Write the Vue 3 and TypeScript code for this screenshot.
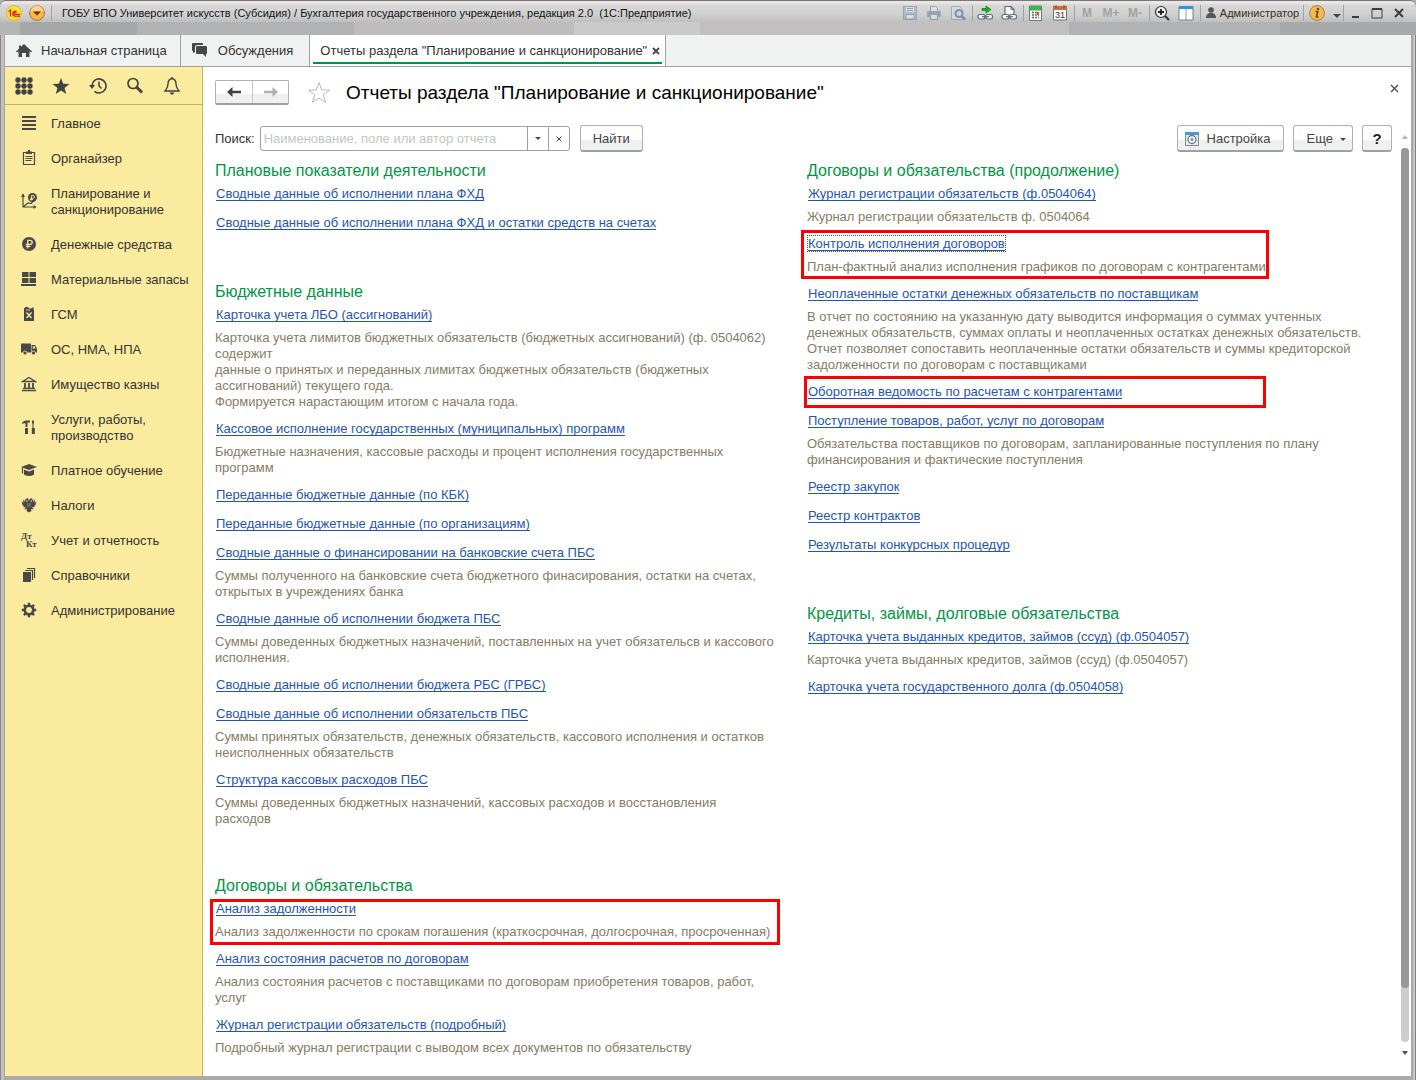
<script setup lang="ts">
import { ref } from 'vue'

interface MenuEntry { title: string; icon: string }
interface Report { name: string; note?: string; mark?: string; focused?: boolean }
interface Group { title: string; reports: Report[] }

const query = ref('')

const systemTools: { label: string; icon: string }[][] = [
  [
    { label: 'Сохранить', icon: '<g opacity=".6"><path d="M1.500 1.500h13v13h-13z" fill="#9fb0c4" stroke="#6d83a0"/><path d="M4 2h8v5H4z" fill="#dfe4ea"/><path d="M4 9.500h8V14H4z" fill="#e8ecf0" stroke="#6d83a0"/><path d="M5 3.500h6M5 5.500h6" stroke="#6d83a0"/></g>' },
    { label: 'Печать', icon: '<g opacity=".6"><path d="M4.500 6V1.500h5l2 2V6" fill="#e6eaee" stroke="#667c98"/><rect x="1" y="6" width="14" height="6" rx="1" fill="#7288a4"/><path d="M4.500 9.500h7v5h-7z" fill="#e6eaee" stroke="#667c98"/></g>' },
    { label: 'Предварительный просмотр', icon: '<g opacity=".7"><path d="M1.500 1.500h8l3 3v10h-11z" fill="#d8dde2" stroke="#8d9db2"/><circle cx="9" cy="8.500" r="3.500" fill="#c9d5e3" stroke="#5d7699" stroke-width="2"/><path d="M11.500 11l3.500 3.500" stroke="#5d7699" stroke-width="2.500"/></g>' },
  ],
  [
    { label: 'Получить ссылку', icon: '<path d="M5 3.500h4V1l5 3.500L9 8V5.500H5z" fill="#13b51b" stroke="#0b7a12" stroke-width=".7"/><rect x="1" y="9.500" width="7" height="4.500" rx="2" fill="#f3f5f7" stroke="#5b6d80" stroke-width="1.200"/><rect x="8.500" y="9.500" width="7" height="4.500" rx="2" fill="#f3f5f7" stroke="#5b6d80" stroke-width="1.200"/><path d="M5 11.700h7" stroke="#5b6d80" stroke-width="1.200"/>' },
    { label: 'Перейти по ссылке', icon: '<path d="M4 9V1.500h6l3 3V9" fill="#f6f8fa" stroke="#5b6d80" stroke-width="1.200"/><path d="M10 1.500v3h3" fill="none" stroke="#5b6d80"/><rect x="1" y="9.500" width="7" height="4.500" rx="2" fill="#f3f5f7" stroke="#5b6d80" stroke-width="1.200"/><rect x="8.500" y="9.500" width="7" height="4.500" rx="2" fill="#f3f5f7" stroke="#5b6d80" stroke-width="1.200"/><path d="M5 11.700h7" stroke="#5b6d80" stroke-width="1.200"/>' },
  ],
  [
    { label: 'Калькулятор', icon: '<path d="M1.500 1h12v14.500h-12z" fill="#f4f6f2" stroke="#6f7d72"/><path d="M2 1h11v4.500H2z" fill="#3fb54a"/><path d="M4 7.500h7M4 10h7M4 12.500h7" stroke="#69716a" stroke-width="1.500" stroke-dasharray="2 1"/><path d="M10 7v3" stroke="#d8502c" stroke-width="2"/>' },
    { label: 'Календарь', icon: '<path d="M1.500 2h13v13h-13z" fill="#fafafa" stroke="#6e7378"/><path d="M1 1h14v4H1z" fill="#c0703c"/><path d="M4 0v3M12 0v3" stroke="#8a4a22"/><text x="8" y="13" font-family="Liberation Sans, sans-serif" font-size="9" text-anchor="middle" fill="#333">31</text>' },
  ],
]

const quickTools: { label: string; icon: string }[] = [
  { label: 'Функции', icon: '<g fill="currentColor"><circle cx="3" cy="3" r="2.700"/><circle cx="9" cy="3" r="2.700"/><circle cx="15" cy="3" r="2.700"/><circle cx="3" cy="9" r="2.700"/><circle cx="9" cy="9" r="2.700"/><circle cx="15" cy="9" r="2.700"/><circle cx="3" cy="15" r="2.700"/><circle cx="9" cy="15" r="2.700"/><circle cx="15" cy="15" r="2.700"/></g>' },
  { label: 'Избранное', icon: '<path d="M9 1l2.200 5.800 6.300.2-5 3.900 1.800 6.100L9 13.500 3.700 17l1.800-6.100-5-3.900 6.300-.2z" fill="currentColor"/>' },
  { label: 'История', icon: '<path d="M3 9a7 7 0 1 1 2.500 5.300" fill="none" stroke="currentColor" stroke-width="1.600"/><path d="M0 8h6l-3 4z" fill="currentColor"/><path d="M10 4.500V9l2.500 2.500" fill="none" stroke="currentColor" stroke-width="1.500"/>' },
  { label: 'Поиск', icon: '<circle cx="7" cy="6.500" r="5" fill="none" stroke="currentColor" stroke-width="1.700"/><path d="M10.500 10l5.500 5.500" stroke="currentColor" stroke-width="3"/>' },
  { label: 'Оповещения', icon: '<path d="M9 1.500c-3 .5-4 2.800-4 5.500 0 3.500-1.500 5-3 7h14c-1.500-2-3-3.500-3-7 0-2.700-1-5-4-5.500z" fill="none" stroke="currentColor" stroke-width="1.400"/><path d="M9 0v2" stroke="currentColor" stroke-width="1.500"/><path d="M6.500 15.500h5L10 17.500H8z" fill="currentColor"/>' },
]

const menu: MenuEntry[] = [
  { title: 'Главное', icon: '<path d="M1 2h14M1 6h14M1 10h14M1 14h14" stroke="currentColor" stroke-width="2"/>' },
  { title: 'Органайзер', icon: '<path d="M2.500 2.500h11v12h-11z" fill="none" stroke="currentColor" stroke-width="1.200"/><path d="M5 1.500h2V0h2v1.500h2V4H5z" fill="currentColor"/><path d="M4.500 6.500h7M4.500 8.500h7M4.500 10.500h6" stroke="currentColor"/>' },
  { title: 'Планирование и санкционирование', icon: '<path d="M2 1v13h13M2 14l5-4 3 .5 3-3" fill="none" stroke="currentColor" stroke-width="1.200"/><path d="M0 4l2-3.500L4 4zM12.500 12l3 2-3 2z" fill="currentColor"/><circle cx="11.500" cy="4.500" r="4.500" fill="currentColor"/><path d="M10.500 7.500V2.500h1.500q1.500 0 1.500 1.300T12 5.200H9M9 6.500h3" fill="none" stroke="#fbeb9e" stroke-width=".9"/>' },
  { title: 'Денежные средства', icon: '<circle cx="8" cy="8" r="7" fill="currentColor"/><path d="M6.800 12.500V4.300h2.400q2 0 2 2t-2 2H4.800M4.800 10.300h4.700" fill="none" stroke="#fbeb9e" stroke-width="1.300"/>' },
  { title: 'Материальные запасы', icon: '<path d="M1 1h6.500v5H1zM8.500 1H15v5H8.500zM1 7h6.500v5H1zM8.500 7H15v5H8.500zM0 13h15v2H0z" fill="currentColor"/>' },
  { title: 'ГСМ', icon: '<path d="M3 2.500L4.500 1H7l1 1.500h2L12.500 1V3L13 4v11H3z" fill="currentColor"/><path d="M5.500 6.500l5 5.500M10.500 6.500l-5 5.500" stroke="#fbeb9e" stroke-width="1.300"/><path d="M5 4h4" stroke="#fbeb9e" stroke-width=".8"/>' },
  { title: 'ОС, НМА, НПА', icon: '<path d="M0 2.500h10v9H0zM10.500 4H14l2 3.500v4h-5.500z" fill="currentColor"/><path d="M11.800 5.200h1.700l1.100 2.300h-2.800z" fill="#fbeb9e"/><circle cx="4" cy="12" r="2" fill="currentColor" stroke="#fbeb9e" stroke-width=".8"/><circle cx="12.500" cy="12" r="2" fill="currentColor" stroke="#fbeb9e" stroke-width=".8"/>' },
  { title: 'Имущество казны', icon: '<path d="M1.500 5.500L8 1.500l6.500 4z" fill="none" stroke="currentColor" stroke-width="1.300"/><path d="M4 7v5M8 7v5M12 7v5" stroke="currentColor" stroke-width="1.800"/><path d="M2 12.300h12M1 14.500h14" stroke="currentColor" stroke-width="1.300"/>' },
  { title: 'Услуги, работы, производство', icon: '<path d="M1 4q1-2.500 4-2.500h4v2H6.500V8h-2V4.500q-2-.7-3.500.5zM4 9h3v6H4zM12 1l1 1v2l-.5 1v4h-1V5L11 4V2zM10.800 9h3v6h-3z" fill="currentColor"/>' },
  { title: 'Платное обучение', icon: '<path d="M0 5l8-3 8 3-8 3zM3 7.500l5 2 5-2v5q-5 3-10 0z" fill="currentColor"/><path d="M1.500 5.500v6" stroke="currentColor" stroke-width="1.200"/>' },
  { title: 'Налоги', icon: '<path d="M8 4L7 1.500 5.500 1 5 3l1.500 1L6 5.500 4 1.500 3.500 5 2 2l.3 4L.5 4l1 4L3 9.500 2 10l3 .5-2 2 3-.5-.5 2L8 15.500l2.500-1.500-.5-2 3 .5-2-2 3-.5-1-.5L14.500 8l1-4-1.800 2L14 2l-1.500 3L12 1.500l-2 4L9.500 4 11 3l-.5-2L9 1.500z" fill="currentColor"/><path d="M7 6v4M9 6v4" stroke="#fbeb9e" stroke-width=".4"/>' },
  { title: 'Учет и отчетность', icon: '<g font-family="Liberation Serif, serif" font-size="9" font-weight="bold" fill="currentColor"><text x="0" y="7">Дт</text><text x="5" y="15">Кт</text></g>' },
  { title: 'Справочники', icon: '<path d="M2 5h8v10H2z" fill="currentColor"/><path d="M4 3.500h7.500V13M6 1.500h7.500V11" fill="none" stroke="currentColor" stroke-width="1.200"/>' },
  { title: 'Администрирование', icon: '<circle cx="8" cy="8" r="4.200" fill="none" stroke="currentColor" stroke-width="2.600"/><path d="M8 .8v3M8 12.200v3M.8 8h3M12.200 8h3M2.900 2.900L5 5M11 11l2.100 2.100M2.900 13.100L5 11M11 5l2.100-2.100" stroke="currentColor" stroke-width="2.400"/>' },
]

const columns: Group[][] = [
  [
    {
      title: 'Плановые показатели деятельности',
      reports: [
        { name: 'Сводные данные об исполнении плана ФХД' },
        { name: 'Сводные данные об исполнении плана ФХД и остатки средств на счетах' },
      ],
    },
    {
      title: 'Бюджетные данные',
      reports: [
        { name: 'Карточка учета ЛБО (ассигнований)', note: 'Карточка учета лимитов бюджетных обязательств (бюджетных ассигнований) (ф. 0504062) содержит\nданные о принятых и переданных лимитах бюджетных обязательств (бюджетных ассигнований) текущего года.\nФормируется нарастающим итогом с начала года.' },
        { name: 'Кассовое исполнение государственных (муниципальных) программ', note: 'Бюджетные назначения, кассовые расходы и процент исполнения государственных программ' },
        { name: 'Переданные бюджетные данные (по КБК)' },
        { name: 'Переданные бюджетные данные (по организациям)' },
        { name: 'Сводные данные о финансировании на банковские счета ПБС', note: 'Суммы полученного на банковские счета бюджетного финасирования, остатки на счетах, открытых в учреждениях банка' },
        { name: 'Сводные данные об исполнении бюджета ПБС', note: 'Суммы доведенных бюджетных назначений, поставленных на учет обязательсв и кассового исполнения.' },
        { name: 'Сводные данные об исполнении бюджета РБС (ГРБС)' },
        { name: 'Сводные данные об исполнении обязательств ПБС', note: 'Суммы принятых обязательств, денежных обязательств, кассового исполнения и остатков неисполненных обязательств' },
        { name: 'Структура кассовых расходов ПБС', note: 'Суммы доведенных бюджетных назначений, кассовых расходов и восстановления\nрасходов' },
      ],
    },
    {
      title: 'Договоры и обязательства',
      reports: [
        { name: 'Анализ задолженности', note: 'Анализ задолженности по срокам погашения (краткосрочная, долгосрочная, просроченная)', mark: 'wide' },
        { name: 'Анализ состояния расчетов по договорам', note: 'Анализ состояния расчетов с поставщиками по договорам приобретения товаров, работ, услуг' },
        { name: 'Журнал регистрации обязательств (подробный)', note: 'Подробный журнал регистрации с выводом всех документов по обязательству' },
      ],
    },
  ],
  [
    {
      title: 'Договоры и обязательства (продолжение)',
      reports: [
        { name: 'Журнал регистрации обязательств (ф.0504064)', note: 'Журнал регистрации обязательств ф. 0504064' },
        { name: 'Контроль исполнения договоров', note: 'План-фактный анализ исполнения графиков по договорам с контрагентами', mark: 'tall', focused: true },
        { name: 'Неоплаченные остатки денежных обязательств по поставщикам', note: 'В отчет по состоянию на указанную дату выводится информация о суммах учтенных денежных обязательств, суммах оплаты и неоплаченных остатках денежных обязательств.\nОтчет позволяет сопоставить неоплаченные остатки обязательств и суммы кредиторской задолженности по договорам с поставщиками' },
        { name: 'Оборотная ведомость по расчетам с контрагентами', mark: 'short' },
        { name: 'Поступление товаров, работ, услуг по договорам', note: 'Обязательства поставщиков по договорам, запланированные поступления по плану финансирования и фактические поступления' },
        { name: 'Реестр закупок' },
        { name: 'Реестр контрактов' },
        { name: 'Результаты конкурсных процедур' },
      ],
    },
    {
      title: 'Кредиты, займы, долговые обязательства',
      reports: [
        { name: 'Карточка учета выданных кредитов, займов (ссуд) (ф.0504057)', note: 'Карточка учета выданных кредитов, займов (ссуд) (ф.0504057)' },
        { name: 'Карточка учета государственного долга (ф.0504058)' },
      ],
    },
  ],
]
</script>

<template>
  <div class="window">
    <header class="titlebar">
      <div class="caption">
        <svg class="logo" width="16" height="16" viewBox="0 0 16 16" aria-hidden="true">
          <circle cx="8" cy="8" r="7.500" fill="#fde23c" stroke="#e5b91d" />
          <path d="M2.500 6.500L4.500 5v6.500M10.500 6.300a2.600 2.600 0 1 0-2 4.900H14M10.500 7.500a1.200 1.200 0 1 0-1.500 1.800h5" fill="none" stroke="#d8231b" stroke-width="1.300" />
        </svg>
        <button class="orb" aria-label="Главное меню">
          <svg width="16" height="16" viewBox="0 0 16 16">
            <circle cx="8" cy="8" r="7.400" fill="#f7b54a" stroke="#a9762d" />
            <path d="M1.500 7a6.500 6.500 0 0 1 13 0q-6.500-2-13 0z" fill="#fbd18a" />
            <path d="M4 6.500h8L8 10.500z" fill="#5d3b12" />
          </svg>
        </button>
        <i class="sep"></i>
        <span class="name">ГОБУ ВПО Университет искусств (Субсидия) / Бухгалтерия государственного учреждения, редакция 2.0&nbsp; (1С:Предприятие)</span>
      </div>

      <div class="system">
        <template v-for="(set, i) in systemTools" :key="i">
          <div class="tools">
            <button v-for="tool in set" :key="tool.label" :aria-label="tool.label">
              <svg width="16" height="16" viewBox="0 0 16 16" v-html="tool.icon"></svg>
            </button>
          </div>
          <i class="sep"></i>
        </template>
        <div class="tools memory">
          <button>M</button><button>M+</button><button>M-</button>
        </div>
        <i class="sep"></i>
        <div class="tools">
          <button aria-label="Масштаб">
            <svg width="16" height="16" viewBox="0 0 16 16">
              <circle cx="7" cy="7" r="5.500" fill="#f1f1f1" stroke="#333" stroke-width="1.200" />
              <path d="M4 7h6M7 4v6" stroke="#222" stroke-width="1.800" />
              <path d="M11 11l4 4" stroke="#333" stroke-width="2.200" />
            </svg>
          </button>
          <button aria-label="Панели">
            <svg width="16" height="16" viewBox="0 0 16 16">
              <path d="M1 1.500h14V15H1z" fill="#fff" stroke="#6e7f92" />
              <path d="M1 1h14v3H1z" fill="#2f93e0" />
              <path d="M8 4v11" stroke="#8796a6" />
            </svg>
          </button>
        </div>
        <i class="sep"></i>
        <button class="user">
          <svg width="12" height="12" viewBox="0 0 12 12" aria-hidden="true">
            <circle cx="6" cy="3" r="2.800" fill="#555" />
            <path d="M1 11q0-4 3.500-5h3Q11 7 11 11z" fill="#555" />
          </svg>
          <span>Администратор</span>
        </button>
        <i class="sep"></i>
        <button class="info" aria-label="О программе">
          <svg width="16" height="16" viewBox="0 0 16 16">
            <circle cx="8" cy="8" r="7.400" fill="#f6b94a" stroke="#a6813f" />
            <path d="M6.500 6.500h2.200L7.500 12h2" fill="none" stroke="#5c503e" stroke-width="1.700" />
            <circle cx="9" cy="4" r="1.300" fill="#5c503e" />
          </svg>
        </button>
        <button class="more" aria-label="Ещё">
          <svg width="8" height="4" viewBox="0 0 8 4"><path d="M0 0h8L4 4z" fill="#444" /></svg>
        </button>
        <i class="sep"></i>
        <div class="tools frame">
          <button aria-label="Свернуть"><svg width="12" height="12" viewBox="0 0 12 12"><path d="M3 10h7" stroke="#3c3c3c" stroke-width="2" /></svg></button>
          <button aria-label="Развернуть"><svg width="12" height="12" viewBox="0 0 12 12"><path d="M1 2h10v9H1z" fill="none" stroke="#3c3c3c" /><path d="M1 2h10" stroke="#3c3c3c" stroke-width="2" /></svg></button>
          <button aria-label="Закрыть"><svg width="12" height="12" viewBox="0 0 12 12"><path d="M2 2l8 8M10 2l-8 8" stroke="#3c3c3c" stroke-width="2" /></svg></button>
        </div>
      </div>
    </header>

    <nav class="tabs">
      <a class="tab home" href="#home">
        <svg width="16" height="14" viewBox="0 0 16 14" aria-hidden="true"><path d="M8 0l8 7.500-1 1-1.500-1.200V13H10V9H6v4H2.500V7.300L1 8.500l-1-1L3 4.700V1.500h2v1.300z" fill="#484848" /></svg>
        <span>Начальная страница</span>
      </a>
      <a class="tab talks" href="#talks">
        <svg width="16" height="15" viewBox="0 0 16 15" aria-hidden="true"><path d="M1 0h9q1 0 1 1v1H5Q3 2 3 4v5L1 10V8Q0 8 0 7V1q0-1 1-1zM5 3h9q1 0 1 1v6q0 1-1 1v3l-3-3H5q-1 0-1-1V4q0-1 1-1z" fill="#484848" /></svg>
        <span>Обсуждения</span>
      </a>
      <div class="tab current">
        <a href="#reports">Отчеты раздела "Планирование и санкционирование"</a>
        <button aria-label="Закрыть вкладку">
          <svg width="8" height="8" viewBox="0 0 8 8"><path d="M1 1l6 6M7 1L1 7" stroke="#484848" stroke-width="1.800" /></svg>
        </button>
      </div>
    </nav>

    <div class="body">
      <aside class="sidebar">
        <div class="quick">
          <button v-for="tool in quickTools" :key="tool.label" :aria-label="tool.label">
            <svg width="18" height="18" viewBox="0 0 18 18" v-html="tool.icon"></svg>
          </button>
        </div>
        <a v-for="entry in menu" :key="entry.title" class="entry" href="#section">
          <svg width="16" height="16" viewBox="0 0 16 16" aria-hidden="true" v-html="entry.icon"></svg>
          <span>{{ entry.title }}</span>
        </a>
      </aside>

      <main class="page">
        <div class="heading">
          <div class="history">
            <button aria-label="Назад"><svg width="14" height="12" viewBox="0 0 14 12"><path d="M0 6l5.500-5v3.800H14v2.400H5.500V11z" fill="#404040" /></svg></button>
            <button aria-label="Вперед"><svg width="14" height="12" viewBox="0 0 14 12"><path d="M14 6L8.500 1v3.800H0v2.400h8.500V11z" fill="#b0b0b0" /></svg></button>
          </div>
          <button class="favorite" aria-label="В избранное">
            <svg width="24" height="23" viewBox="0 0 24 23"><path d="M12 1.500l2.700 7.400 7.900.2-6.300 4.800 2.300 7.600-6.600-4.500-6.600 4.500 2.300-7.600-6.300-4.800 7.900-.2z" fill="#fff" stroke="#b4b8bb" /></svg>
          </button>
          <h1>Отчеты раздела "Планирование и санкционирование"</h1>
          <button class="close" aria-label="Закрыть">
            <svg width="9" height="9" viewBox="0 0 9 9"><path d="M1 1l7 7M8 1L1 8" stroke="#484848" stroke-width="1.300" /></svg>
          </button>
        </div>

        <div class="scroller">
          <div class="content">
            <div class="toolbar">
              <label for="search">Поиск:</label>
              <div class="field">
                <input id="search" v-model="query" type="text" placeholder="Наименование, поле или автор отчета" />
                <button aria-label="Выбрать"><svg width="6" height="3" viewBox="0 0 6 3"><path d="M0 0h6L3 3z" fill="#484848" /></svg></button>
                <button aria-label="Очистить" @click="query = ''"><svg width="6" height="6" viewBox="0 0 6 6"><path d="M.5.5l5 5M5.500.5l-5 5" stroke="#484848" /></svg></button>
              </div>
              <button class="btn find">Найти</button>
              <div class="actions">
                <button class="btn">
                  <svg width="14" height="14" viewBox="0 0 14 14" aria-hidden="true">
                    <path d="M.5.5h13v13H.5z" fill="#e9edf0" stroke="#7f8b96" />
                    <path d="M0 0h14v3H0z" fill="#3d9be6" />
                    <circle cx="7" cy="7.500" r="4" fill="#f4f4f4" stroke="#777" stroke-width="1.300" />
                    <circle cx="7" cy="7.500" r="1.500" fill="#8a8a8a" />
                  </svg>
                  <span>Настройка</span>
                </button>
                <button class="btn etc">
                  <span>Еще</span>
                  <svg width="6" height="3" viewBox="0 0 6 3" aria-hidden="true"><path d="M0 0h6L3 3z" fill="#484848" /></svg>
                </button>
                <button class="btn help">?</button>
              </div>
            </div>

            <div class="columns">
              <div v-for="(column, c) in columns" :key="c" class="column">
                <section v-for="group in column" :key="group.title" class="group">
                  <h2>{{ group.title }}</h2>
                  <div v-for="report in group.reports" :key="report.name" class="report" :class="report.mark">
                    <div class="line"><a href="#report" :class="{ focused: report.focused }">{{ report.name }}</a></div>
                    <p v-if="report.note">{{ report.note }}</p>
                  </div>
                </section>
              </div>
            </div>
          </div>

          <div class="scrollbar" aria-hidden="true">
            <svg width="6" height="4" viewBox="0 0 6 4"><path d="M0 4h6L3 0z" fill="#b8b8b8" /></svg>
            <div class="track"><div class="thumb"></div></div>
            <svg width="6" height="4" viewBox="0 0 6 4"><path d="M0 0h6L3 4z" fill="#505050" /></svg>
          </div>
        </div>
      </main>
    </div>
  </div>
</template>

<style>
body {
  margin: 0;
  background: #b0b0b0;
}
</style>

<style scoped>
*,
*::after {
  box-sizing: border-box;
}

.window {
  display: flex;
  flex-direction: column;
  min-height: 100vh;
  padding: 0 5px 4px;
  border-top: 1px solid #7b7779;
  border-radius: 6px 6px 0 0;
  background: linear-gradient(90deg, #8a8889 0 1px, #c2c0c1 1px 4px, #a3a3a3 4px 5px, #aaa 5px calc(100% - 5px), #a9a9a9 calc(100% - 5px) calc(100% - 3px), #cfcfcf calc(100% - 2px) calc(100% - 1px), #7f7f7f calc(100% - 1px));
  font: 13px/16px "Liberation Sans", Arial, sans-serif;
  color: #333;
}

button {
  display: inline-flex;
  align-items: center;
  justify-content: center;
  padding: 0;
  border: 0;
  background: none;
  font: inherit;
  color: inherit;
}

a {
  color: inherit;
  text-decoration: none;
}

svg {
  display: block;
  flex: none;
}

.titlebar {
  display: flex;
  justify-content: space-between;
  height: 34px;
  margin: 0 -5px;
  padding: 0 6px 10px 6px;
  border-radius: 6px 6px 0 0;
  background:
    linear-gradient(90deg, #b5b5b6 0 20px, #a6a7a9 20px 137px, #b1b2b4 137px 354px, #bfbcbd 354px 574px, #cacaca 574px 700px, #c2bfc0 700px 1069px, #b1b2b4 1069px 1280px, #a8a9ab 1280px) 0 21px / 100% 13px no-repeat,
    linear-gradient(#ebe6e5 0 2px, #d8d8d8 4px, #cfcfcf 14px, #bfbfbf 21px);
  font-size: 11px;
  color: #111;
}

.caption,
.system,
.tools {
  display: flex;
  align-items: center;
}

.caption {
  min-width: 0;
}

.orb {
  margin: 0 6px 0 7px;
}

.name {
  margin-left: 10px;
  white-space: nowrap;
}

.sep {
  flex: none;
  width: 1px;
  height: 16px;
  background: #a2a2a2;
}

.tools {
  padding-right: 2px;
}

.tools button {
  width: 24px;
}

.tools.frame {
  padding-right: 0;
}

.tools.frame button {
  width: 22px;
}

.memory {
  font-size: 12px;
  font-weight: bold;
  color: #a2a2a4;
}

.user {
  width: 102px;
  gap: 3px;
  color: #3d2d10;
}

.info {
  width: 26px;
}

.more {
  width: 13px;
  padding-top: 6px;
}

.tabs {
  display: flex;
  height: 32px;
  border-bottom: 1px solid #a0a0a0;
  background: #f0f2f1;
}

.tab {
  display: flex;
  align-items: center;
  border-right: 1px solid #a0a0a0;
  white-space: nowrap;
}

.home {
  gap: 9px;
  padding: 0 13px 0 11px;
}

.talks {
  gap: 10px;
  padding: 0 16px 0 11px;
}

.current {
  position: relative;
  gap: 5px;
  padding: 0 5px 0 10px;
  background: #fff;
}

.current::after {
  content: "";
  position: absolute;
  right: 3px;
  bottom: 2px;
  left: 3px;
  height: 2px;
  background: #009646;
}

.body {
  display: flex;
  flex: 1;
}

.sidebar {
  flex: none;
  width: 198px;
  border-right: 1px solid #c2b263;
  background: #fbeb9e;
  color: #333;
}

.quick {
  display: flex;
  height: 38px;
  border-bottom: 1px solid #c2b263;
  color: #424242;
}

.quick button {
  width: 37px;
}

.entry {
  display: flex;
  align-items: center;
  gap: 14px;
  padding: 9px 10px 8px 16px;
}

.entry span {
  padding-top: 2px;
}

.entry svg {
  color: #484848;
}

.page {
  flex: 1;
  min-width: 0;
  display: flex;
  flex-direction: column;
  background: #fff;
}

.heading {
  display: flex;
  align-items: center;
  height: 58px;
  padding: 0 12px 8px;
}

.history {
  display: flex;
  height: 25px;
  border: 1px solid #b0b0b0;
  border-bottom: 2px solid #a0a0a0;
  border-radius: 2px;
  background: linear-gradient(#fff 60%, #eef1f0 60%);
}

.history button {
  width: 36px;
}

.history button + button {
  border-left: 1px solid #c8c8c8;
}

.favorite {
  margin: 0 15px 0 18px;
}

h1 {
  margin: 0;
  padding-top: 2px;
  font-size: 19px;
  line-height: 22px;
  font-weight: normal;
  color: #000;
}

.close {
  align-self: flex-start;
  margin: 17px 0 0 auto;
}

.scroller {
  display: flex;
  flex: 1;
}

.content {
  flex: 1;
  min-width: 0;
  padding: 0 6px 20px 12px;
}

.toolbar {
  display: flex;
  align-items: center;
  height: 27px;
  margin-bottom: 9px;
}

.field {
  display: flex;
  width: 310px;
  height: 25px;
  margin: 0 10px 0 5px;
  border: 1px solid #a0a0a0;
  border-radius: 3px;
  background: #fff;
}

.field input {
  flex: 1;
  min-width: 0;
  padding: 0 3px;
  border: 0;
  outline: 0;
  background: none;
  font: inherit;
}

.field input::placeholder {
  color: #c3c6bf;
  opacity: 1;
}

.field button {
  width: 21px;
  border-left: 1px solid #a0a0a0;
}

.btn {
  height: 27px;
  padding: 2px 12px 0;
  border: 1px solid #b0b0b0;
  border-bottom: 2px solid #a0a0a0;
  border-radius: 3px;
  background: linear-gradient(#fff 60%, #eef1f0 60%);
  color: #444;
}

.actions {
  display: flex;
  gap: 9px;
  margin-left: auto;
}

.actions .btn:first-child {
  gap: 8px;
  padding: 2px 12px 0 7px;
}

.actions .etc {
  gap: 7px;
  padding: 2px 6px 0 13px;
}

.actions .help {
  width: 30px;
  padding: 2px 0 0;
  font-size: 15px;
  font-weight: bold;
  color: #222;
}

.columns {
  display: grid;
  grid-template-columns: 1fr 1fr;
  gap: 30px;
  padding-right: 23px;
}

.group + .group {
  margin-top: 49px;
}

h2 {
  margin: 0 0 5px;
  font-size: 16px;
  line-height: 20px;
  font-weight: normal;
  color: #009646;
}

.report {
  position: relative;
}

.report + .report {
  margin-top: 11px;
}

.line {
  padding: 0 1px;
}

.line:last-child {
  padding-bottom: 2px;
}

.line a {
  display: inline-block;
  height: 15px;
  border-bottom: 1px solid #1f55b5;
  color: #1f55b5;
  vertical-align: top;
}

.line .focused {
  outline: 1px dotted #555;
}

.report p {
  margin: 7px 0 0;
  white-space: pre-line;
  color: #857c64;
}

.wide::after,
.tall::after,
.short::after {
  content: "";
  position: absolute;
  border: 3px solid #f00;
  pointer-events: none;
}

.wide::after {
  inset: -2px -3px -5px -5px;
}

.tall::after {
  inset: -6px auto -4px -6px;
  width: 468px;
}

.short::after {
  inset: -8px auto -6px -3px;
  width: 462px;
}

.scrollbar {
  display: flex;
  flex: none;
  flex-direction: column;
  align-items: center;
  gap: 9px;
  width: 13px;
  padding: 10px 0 21px;
}

.track {
  flex: 1;
  width: 8px;
  border-radius: 4px;
  background: #cdcdcd;
}

.thumb {
  height: 94%;
  border-radius: 4px;
  background: #989898;
}
</style>
